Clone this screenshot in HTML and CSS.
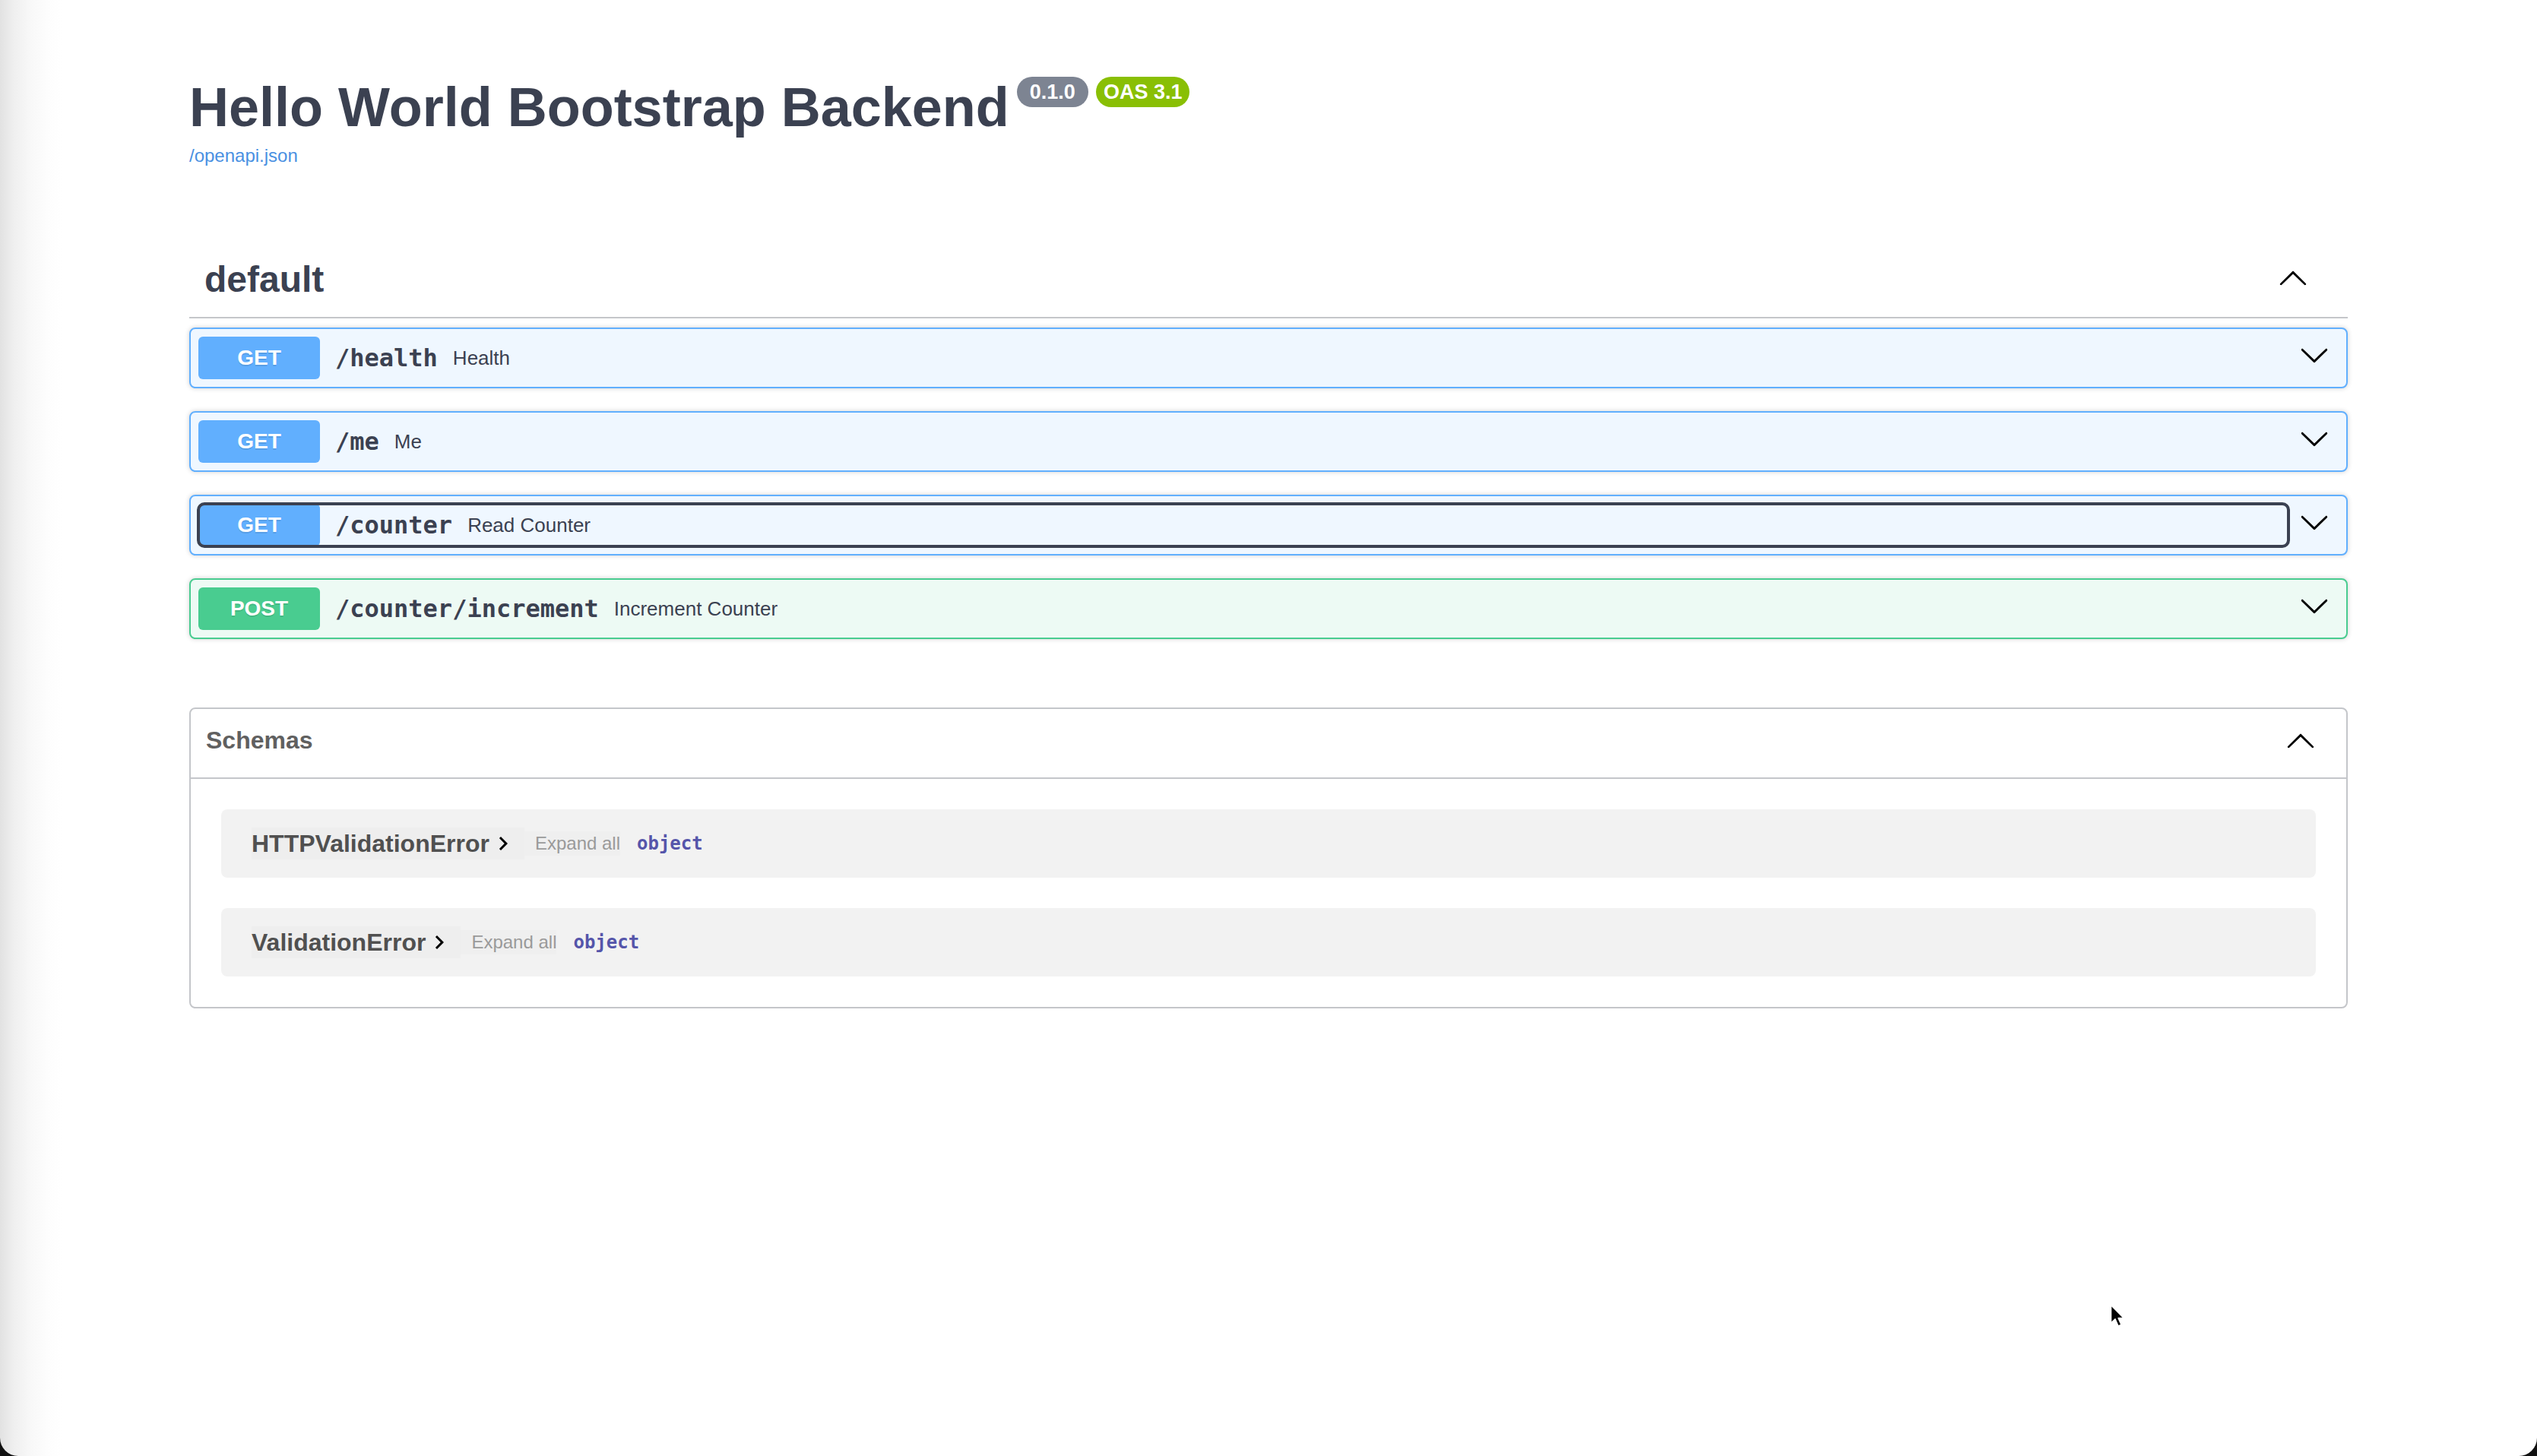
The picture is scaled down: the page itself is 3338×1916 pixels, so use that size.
FILE: index.html
```html
<!DOCTYPE html>
<html lang="en">
<head>
<meta charset="utf-8">
<title>Hello World Bootstrap Backend - Swagger UI</title>
<link rel="stylesheet" href="styles.css">
</head>
<body>
<div class="window">
  <div class="wrapper">
    <div class="info">
      <hgroup class="main">
        <h2 class="title">Hello World Bootstrap Backend<span class="badges"><small class="badge badge-version">0.1.0</small><small class="badge badge-oas">OAS 3.1</small></span></h2>
        <div class="url-line"><a class="url" href="#">/openapi.json</a></div>
      </hgroup>
    </div>

    <section class="tag-section">
      <h3 class="opblock-tag">
        <span class="tag-name">default</span>
        <button class="expand-operation" aria-label="Collapse operation">
          <svg class="arrow" viewBox="0 0 20 20" width="40" height="40"><path d="M17.418 14.908c.272.268.709.268.979 0s.271-.701 0-.969l-7.908-7.83c-.27-.268-.707-.268-.979 0l-7.908 7.83c-.27.268-.27.701 0 .969.271.268.709.268.979 0L10 7.767l7.418 7.141z"/></svg>
        </button>
      </h3>

      <div class="opblock opblock-get">
        <div class="opblock-summary">
          <button class="summary-control">
            <span class="method">GET</span>
            <span class="path">/health</span>
            <span class="description">Health</span>
          </button>
          <button class="control-arrow" aria-label="Expand">
            <svg class="arrow" viewBox="0 0 20 20" width="40" height="40"><path d="M17.418 6.109c.272-.268.709-.268.979 0s.271.701 0 .969l-7.908 7.83c-.27.268-.707.268-.979 0l-7.908-7.83c-.27-.268-.27-.701 0-.969.271-.268.709-.268.979 0L10 13.25l7.418-7.141z"/></svg>
          </button>
        </div>
      </div>

      <div class="opblock opblock-get">
        <div class="opblock-summary">
          <button class="summary-control">
            <span class="method">GET</span>
            <span class="path">/me</span>
            <span class="description">Me</span>
          </button>
          <button class="control-arrow" aria-label="Expand">
            <svg class="arrow" viewBox="0 0 20 20" width="40" height="40"><path d="M17.418 6.109c.272-.268.709-.268.979 0s.271.701 0 .969l-7.908 7.83c-.27.268-.707.268-.979 0l-7.908-7.83c-.27-.268-.27-.701 0-.969.271-.268.709-.268.979 0L10 13.25l7.418-7.141z"/></svg>
          </button>
        </div>
      </div>

      <div class="opblock opblock-get">
        <div class="opblock-summary">
          <button class="summary-control focused">
            <span class="method">GET</span>
            <span class="path">/counter</span>
            <span class="description">Read Counter</span>
          </button>
          <button class="control-arrow" aria-label="Expand">
            <svg class="arrow" viewBox="0 0 20 20" width="40" height="40"><path d="M17.418 6.109c.272-.268.709-.268.979 0s.271.701 0 .969l-7.908 7.83c-.27.268-.707.268-.979 0l-7.908-7.83c-.27-.268-.27-.701 0-.969.271-.268.709-.268.979 0L10 13.25l7.418-7.141z"/></svg>
          </button>
        </div>
      </div>

      <div class="opblock opblock-post">
        <div class="opblock-summary">
          <button class="summary-control">
            <span class="method">POST</span>
            <span class="path">/counter/increment</span>
            <span class="description">Increment Counter</span>
          </button>
          <button class="control-arrow" aria-label="Expand">
            <svg class="arrow" viewBox="0 0 20 20" width="40" height="40"><path d="M17.418 6.109c.272-.268.709-.268.979 0s.271.701 0 .969l-7.908 7.83c-.27.268-.707.268-.979 0l-7.908-7.83c-.27-.268-.27-.701 0-.969.271-.268.709-.268.979 0L10 13.25l7.418-7.141z"/></svg>
          </button>
        </div>
      </div>
    </section>

    <section class="models">
      <h4 class="models-head">
        <button class="models-control">
          <span>Schemas</span>
          <svg class="arrow" viewBox="0 0 20 20" width="40" height="40"><path d="M17.418 14.908c.272.268.709.268.979 0s.271-.701 0-.969l-7.908-7.83c-.27-.268-.707-.268-.979 0l-7.908 7.83c-.27.268-.27.701 0 .969.271.268.709.268.979 0L10 7.767l7.418 7.141z"/></svg>
        </button>
      </h4>

      <div class="model-container">
        <button class="model-title-btn">
          <span class="model-title">HTTPValidationError</span>
          <svg class="chev" viewBox="0 0 24 24" width="36" height="36"><path d="M10 6L8.59 7.41 13.17 12l-4.58 4.59L10 18l6-6z"/></svg>
        </button>
        <button class="expand-all">Expand all</button>
        <span class="type">object</span>
      </div>

      <div class="model-container">
        <button class="model-title-btn">
          <span class="model-title">ValidationError</span>
          <svg class="chev" viewBox="0 0 24 24" width="36" height="36"><path d="M10 6L8.59 7.41 13.17 12l-4.58 4.59L10 18l6-6z"/></svg>
        </button>
        <button class="expand-all">Expand all</button>
        <span class="type">object</span>
      </div>
    </section>
  </div>

  <svg class="cursor" viewBox="0 0 22 34" width="22" height="34" aria-hidden="true">
    <path d="M1.5 1.5 L1.5 25 L7 19.8 L11 29 L15 27.3 L11.2 18.6 L18.5 18.6 Z" fill="#000" stroke="#fff" stroke-width="1.6" stroke-linejoin="round"/>
  </svg>
</div>
</body>
</html>
```

FILE: styles.css
```css
html, body {
  margin: 0;
  padding: 0;
  background: #111;
}

.window {
  position: relative;
  height: 1916px;
  overflow: hidden;
  border-radius: 0 0 24px 24px;
  background: linear-gradient(90deg, #e2e2e2 0px, #efefef 18px, #f8f8f8 40px, #fdfdfd 62px, #ffffff 82px);
  font-family: "Liberation Sans", Arial, sans-serif;
  color: #3b4151;
}

.wrapper {
  box-sizing: border-box;
  max-width: 2920px;
  margin: 0 auto;
  padding: 0 40px;
}

button {
  font: inherit;
  color: inherit;
  background: none;
  border: none;
  padding: 0;
  margin: 0;
  cursor: pointer;
}

/* ---------- info ---------- */
.info {
  margin: 100px 0 98px;
}

.main {
  margin: 0 0 40px;
}

.title {
  margin: 0;
  font-size: 72px;
  font-weight: 700;
  color: #3b4151;
  line-height: normal;
}

.badges {
  display: inline-flex;
  vertical-align: top;
  margin-top: 1px;
}

.badge {
  display: inline-block;
  height: 40px;
  line-height: 40px;
  margin-left: 10px;
  border-radius: 20px;
  font-size: 27px;
  font-weight: 700;
  color: #fff;
}

.badge-version {
  padding: 0 17px;
  background: #7d8492;
}

.badge-oas {
  padding: 0 10px;
  background: #89bf04;
}

.url-line {
  font-size: 32px;
  line-height: normal;
  padding-top: 2px;
}

.url {
  font-size: 24px;
  color: #4990e2;
  text-decoration: none;
}

/* ---------- tag section ---------- */
.tag-section {
  display: flex;
  flex-direction: column;
}

.opblock-tag {
  display: flex;
  align-items: center;
  justify-content: space-between;
  margin: 0 0 12px;
  padding: 20px 40px 20px 20px;
  border-bottom: 2px solid rgba(59, 65, 81, 0.3);
  font-size: 48px;
  font-weight: 700;
  color: #3b4151;
}

.tag-name {
  line-height: 58px;
}

.expand-operation {
  display: flex;
  padding: 2px 12px;
  margin-top: -6px;
}

.arrow {
  display: block;
  fill: #000;
}

.opblock {
  margin: 0 0 30px;
  border: 2px solid #000;
  border-radius: 8px;
  box-shadow: 0 0 6px rgba(0, 0, 0, 0.19);
}

.opblock-get {
  background: #eff7ff;
  border-color: #61affe;
}

.opblock-post {
  background: #edfaf4;
  border-color: #49cc90;
}

.opblock-summary {
  display: flex;
  align-items: center;
  padding: 10px;
}

.summary-control {
  flex: 1;
  display: flex;
  align-items: center;
  text-align: left;
  border-radius: 8px;
}

.summary-control.focused {
  outline: 4px solid #3b4151;
  outline-offset: -2px;
}

.method {
  min-width: 160px;
  padding: 12px 0;
  line-height: 32px;
  font-size: 28px;
  font-weight: 700;
  text-align: center;
  color: #fff;
  border-radius: 6px;
  text-shadow: 0 2px 0 rgba(0, 0, 0, 0.1);
}

.opblock-get .method {
  background: #61affe;
}

.opblock-post .method {
  background: #49cc90;
}

.path {
  padding: 0 20px;
  font-family: "DejaVu Sans Mono", "Liberation Mono", monospace;
  font-size: 32px;
  font-weight: 700;
  color: #3b4151;
}

.description {
  flex: 1;
  font-size: 26px;
  color: #3b4151;
}

.control-arrow {
  display: flex;
  padding: 2px 12px;
  margin-left: 2px;
  margin-top: -8px;
}

/* ---------- models ---------- */
.models {
  margin: 60px 0;
  padding-bottom: 40px;
  border: 2px solid rgba(59, 65, 81, 0.3);
  border-radius: 8px;
}

.models-head {
  margin: 0;
  padding: 16px 40px 24px 20px;
  border-bottom: 2px solid rgba(59, 65, 81, 0.3);
  font-size: 32px;
  font-weight: 700;
  color: #606060;
}

.models-control {
  width: 100%;
  height: 50px;
  display: flex;
  align-items: center;
  justify-content: space-between;
  color: #606060;
  font-weight: 700;
}

.model-container {
  display: flex;
  align-items: center;
  height: 90px;
  margin: 40px 40px 0;
  padding: 0 40px;
  border-radius: 8px;
  background: rgba(0, 0, 0, 0.05);
}

.model-title-btn {
  display: flex;
  align-items: center;
  height: 42px;
  padding-right: 10px;
  background: rgba(0, 0, 0, 0.015);
}

.model-title {
  font-size: 32px;
  font-weight: 700;
  color: #505050;
}

.chev {
  display: block;
  fill: #000;
}

.expand-all {
  height: 32px;
  padding-left: 14px;
  font-size: 24px;
  color: #9a9a9a;
  background: rgba(0, 0, 0, 0.01);
}

.type {
  margin-left: 22px;
  font-family: "DejaVu Sans Mono", "Liberation Mono", monospace;
  font-size: 24px;
  font-weight: 700;
  color: #55a;
}

/* ---------- pointer overlay ---------- */
.cursor {
  position: absolute;
  left: 2776px;
  top: 1716px;
}
```
